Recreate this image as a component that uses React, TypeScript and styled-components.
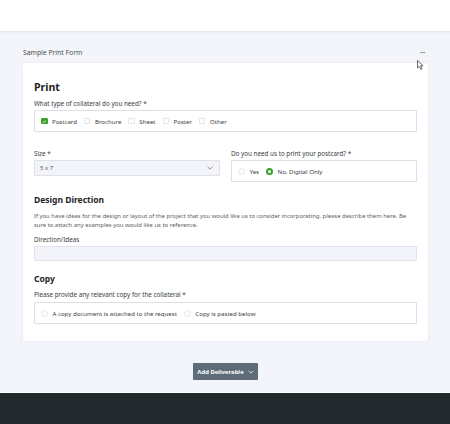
import React from "react";
import styled, { createGlobalStyle } from "styled-components";

const Global = createGlobalStyle`
  html, body { margin: 0; padding: 0; }
  body {
    background: #f4f5fa;
    font-family: "Noto Sans", "Open Sans", sans-serif;
    color: #2b2f33;
  }
`;

const Page = styled.div`
  display: flex;
  flex-direction: column;
  min-height: 424px;
  position: relative;
`;

const TopBar = styled.header`
  height: 31px;
  background: #ffffff;
  border-bottom: 1px solid #e6e8ee;
  box-shadow: 0 1px 2px rgba(0, 0, 0, 0.04);
`;

const Main = styled.main`
  flex: 1;
  padding: 0 22px 0 23px;
  display: flex;
  flex-direction: column;
`;

const TitleRow = styled.div`
  display: flex;
  justify-content: space-between;
  align-items: center;
  height: 14px;
  margin-top: 13px;
  margin-bottom: 4px;
  font-size: 6.8px;
  color: #4a4e53;
`;

const Dots = styled.span`
  font-size: 7px;
  font-weight: 700;
  letter-spacing: -0.3px;
  color: #555a60;
  margin-right: 3px;
`;

const Card = styled.section`
  background: #ffffff;
  border-radius: 1px;
  box-shadow: 0 0 3px rgba(30, 40, 60, 0.08);
  padding: 15px 11px 17px;
  display: flex;
  flex-direction: column;
`;

const Heading = styled.h2<{ $big?: boolean }>`
  margin: 0;
  font-weight: 700;
  font-size: ${(p) => (p.$big ? "10.6px" : "8.5px")};
  line-height: ${(p) => (p.$big ? "18px" : "14px")};
  color: #1f2326;
`;

const Label = styled.div<{ $mt?: number; $mb?: number }>`
  font-size: 6.3px;
  line-height: 8px;
  color: #3a3e42;
  margin-top: ${(p) => p.$mt ?? 0}px;
  margin-bottom: ${(p) => p.$mb ?? 2}px;
`;

const Help = styled.p`
  margin: 5px 0 0;
  font-size: 5.9px;
  line-height: 9px;
  color: #5b6066;
`;

const OptionBox = styled.div`
  height: 22px;
  box-sizing: border-box;
  border: 1px solid #dcdfe5;
  border-radius: 1px;
  display: flex;
  align-items: center;
  padding: 0 7px 0 6px;
  gap: 7px;
`;

const Option = styled.label`
  display: flex;
  align-items: center;
  gap: 4.5px;
  font-size: 6.1px;
  color: #3c4045;
`;

const Box = styled.span<{ $on?: boolean }>`
  width: 6.5px;
  height: 6.5px;
  border-radius: 1px;
  box-sizing: border-box;
  border: 1px solid ${(p) => (p.$on ? "#3aa12a" : "#e2e4e8")};
  background: ${(p) => (p.$on ? "#3aa12a" : "#fff")};
  display: flex;
  align-items: center;
  justify-content: center;
`;

const Radio = styled.span<{ $on?: boolean }>`
  width: 7px;
  height: 7px;
  border-radius: 50%;
  box-sizing: border-box;
  border: ${(p) => (p.$on ? "2px solid #3aa12a" : "1px solid #e4e6ea")};
  background: #fff;
`;

const Columns = styled.div`
  display: grid;
  grid-template-columns: 1fr 1fr;
  gap: 11px;
  margin-top: 18px;
`;

const Field = styled.div`
  display: flex;
  flex-direction: column;
`;

const Select = styled.div`
  height: 16px;
  box-sizing: border-box;
  background: #f3f4f9;
  border: 1px solid #dfe2ea;
  border-radius: 1px;
  display: flex;
  align-items: center;
  justify-content: space-between;
  padding: 0 6px 0 5px;
  font-size: 6px;
  color: #54595f;
`;

const Input = styled.div`
  height: 15px;
  box-sizing: border-box;
  background: #f3f4f9;
  border: 1px solid #dfe2ea;
  border-radius: 1px;
`;

const Section = styled.div`
  margin-top: 11px;
  display: flex;
  flex-direction: column;
`;

const ButtonRow = styled.div`
  display: flex;
  justify-content: center;
  margin-top: 22px;
  margin-bottom: 12px;
`;

const AddButton = styled.button`
  height: 17px;
  width: 65px;
  border: none;
  border-radius: 1px;
  background: #5d6c78;
  color: #fff;
  font-family: inherit;
  font-size: 5.9px;
  font-weight: 700;
  display: flex;
  align-items: center;
  justify-content: center;
  gap: 4px;
  padding: 0;
`;

const Footer = styled.footer`
  height: 32px;
  background: #222a2d;
  border-top: 1px solid #ffffff;
`;

const Cursor = styled.svg`
  position: absolute;
  left: 417px;
  top: 60px;
`;

const Check = () => (
  <svg width="5" height="5" viewBox="0 0 10 10">
    <path d="M2 5.2 L4.2 7.4 L8.2 2.8" stroke="#fff" strokeWidth="1.8" fill="none" />
  </svg>
);

const Chevron = ({ color = "#6a7078" }: { color?: string }) => (
  <svg width="6" height="4" viewBox="0 0 10 6">
    <path d="M1 1 L5 5 L9 1" stroke={color} strokeWidth="1.3" fill="none" />
  </svg>
);

const collateral = ["Postcard", "Brochure", "Sheet", "Poster", "Other"];

export default function App() {
  return (
    <Page>
      <Global />
      <TopBar />
      <Main>
        <TitleRow>
          <span>Sample Print Form</span>
          <Dots>···</Dots>
        </TitleRow>
        <Card>
          <Heading $big>Print</Heading>
          <Label $mt={4}>What type of collateral do you need? *</Label>
          <OptionBox>
            {collateral.map((c, i) => (
              <Option key={c}>
                <Box $on={i === 0}>{i === 0 && <Check />}</Box>
                {c}
              </Option>
            ))}
          </OptionBox>

          <Columns>
            <Field>
              <Label>Size *</Label>
              <Select>
                <span>5 x 7</span>
                <Chevron />
              </Select>
            </Field>
            <Field>
              <Label>Do you need us to print your postcard? *</Label>
              <OptionBox>
                <Option>
                  <Radio />
                  Yes
                </Option>
                <Option>
                  <Radio $on />
                  No, Digital Only
                </Option>
              </OptionBox>
            </Field>
          </Columns>

          <Section>
            <Heading>Design Direction</Heading>
            <Help>
              If you have ideas for the design or layout of the project that you would like us
              to consider incorporating, please describe them here. Be sure to attach any
              examples you would like us to reference.
            </Help>
            <Label $mt={6}>Direction/Ideas</Label>
            <Input />
          </Section>

          <Section>
            <Heading>Copy</Heading>
            <Label $mt={5} $mb={3}>Please provide any relevant copy for the collateral *</Label>
            <OptionBox>
              <Option>
                <Radio />
                A copy document is attached to the request
              </Option>
              <Option>
                <Radio />
                Copy is pasted below
              </Option>
            </OptionBox>
          </Section>
        </Card>
        <ButtonRow>
          <AddButton>
            Add Deliverable
            <Chevron color="#ffffff" />
          </AddButton>
        </ButtonRow>
      </Main>
      <Footer />
      <Cursor width="7" height="10" viewBox="0 0 7 10">
        <path d="M0.5 0.5 L0.5 8 L2.4 6.3 L3.8 9.3 L5 8.7 L3.7 5.8 L6.2 5.8 Z" fill="#fff" stroke="#444" strokeWidth="0.8" />
      </Cursor>
    </Page>
  );
}
